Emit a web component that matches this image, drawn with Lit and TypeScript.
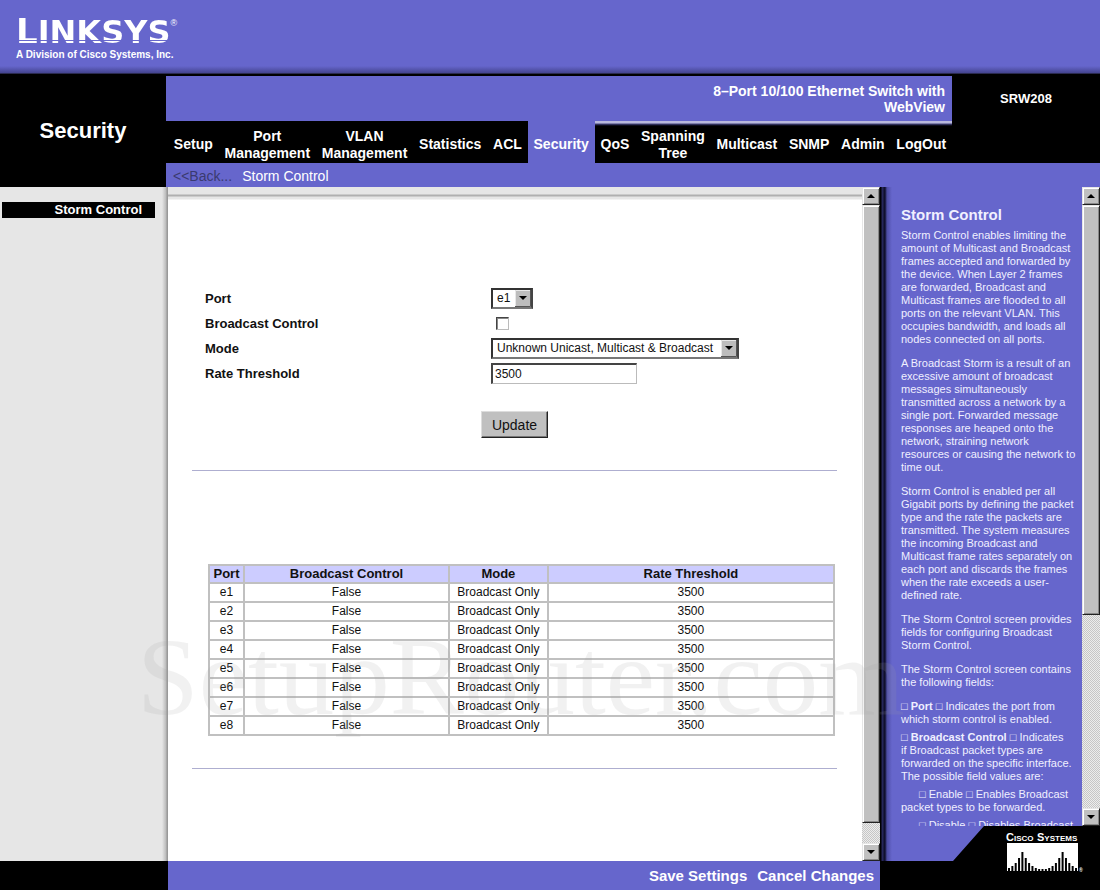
import { LitElement, html, css, svg } from "lit";
import { customElement, property } from "lit/decorators.js";
import { classMap } from "lit/directives/class-map.js";

const TABS = [
  "Setup",
  "Port Management",
  "VLAN Management",
  "Statistics",
  "ACL",
  "Security",
  "QoS",
  "Spanning Tree",
  "Multicast",
  "SNMP",
  "Admin",
  "LogOut",
];
const ACTIVE = 5;
const PORTS = ["e1", "e2", "e3", "e4", "e5", "e6", "e7", "e8"];

@customElement("scroll-rail")
class ScrollRail extends LitElement {
  /** Share of the rail taken by the thumb, in percent. */
  @property({ type: Number }) thumb = 50;

  static styles = css`
    :host {
      display: flex;
      flex-direction: column;
      flex: none;
      width: 18px;
      background: repeating-conic-gradient(#c6c6c6 0 25%, #ececec 0 50%) 0 0 / 2px 2px;
    }
    .step,
    .thumb {
      box-sizing: border-box;
      background: #c0c0c0;
      border: 1px solid;
      border-color: #e6e6e6 #222 #222 #e6e6e6;
      box-shadow: inset 1px 1px #fff, inset -1px -1px #888;
    }
    .step {
      flex: none;
      display: grid;
      place-items: center;
      height: 18px;
      padding: 0;
      border-radius: 0;
    }
    .rail {
      flex: 1;
      min-height: 0;
    }
    .thumb {
      height: var(--size);
    }
    svg {
      display: block;
    }
  `;

  render() {
    return html`
      <button class="step" aria-label="Scroll up">
        <svg width="8" height="4" viewBox="0 0 8 4"><path d="M0 4 4 0 8 4Z" /></svg>
      </button>
      <div class="rail"><div class="thumb" style="--size:${this.thumb}%"></div></div>
      <button class="step" aria-label="Scroll down">
        <svg width="8" height="4" viewBox="0 0 8 4"><path d="M0 0H8L4 4Z" /></svg>
      </button>
    `;
  }
}

@customElement("app-root")
class AppRoot extends LitElement {
  static styles = css`
    :host {
      position: relative;
      display: flex;
      flex-direction: column;
      height: 100vh;
      overflow: hidden;
      background: #000;
      color: #111;
      font-family: "Liberation Sans", Arial, sans-serif;
      font-size: 12px;
    }
    a {
      color: inherit;
      text-decoration: none;
    }

    .brand {
      flex: none;
      box-sizing: border-box;
      height: 74px;
      padding: 14px 16px 0;
      color: #fff;
      background: linear-gradient(#6666cc 66px, #44448f 73px, #111 74px);
    }
    .logo {
      display: flex;
      align-items: baseline;
      height: 34px;
      font: bold 32px/34px "DejaVu Sans", sans-serif;
    }
    .word {
      color: transparent;
      background: linear-gradient(#fff 26px, #6666cc 26px 27px, #fff 27px);
      -webkit-background-clip: text;
      background-clip: text;
    }
    .initial {
      font-size: 34px;
    }
    .mark {
      align-self: flex-start;
      font: 9px/18px "Liberation Sans", Arial, sans-serif;
    }
    .tagline {
      font: bold 10px/14px "Liberation Sans", Arial, sans-serif;
    }

    .masthead {
      flex: none;
      display: grid;
      grid-template-columns: 166px minmax(0, 1fr) 148px;
      grid-template-rows: 47px 42px 24px;
      color: #fff;
    }
    .section {
      grid-row: 1 / 4;
      display: grid;
      place-items: center;
      margin: 0;
      font-size: 22px;
    }
    .product {
      display: flex;
      justify-content: flex-end;
      align-items: center;
      margin-top: 2px;
      padding-right: 7px;
      background: #6666cc;
      font: bold 14px/16px "Liberation Sans", Arial, sans-serif;
      text-align: right;
    }
    .product span {
      max-width: 240px;
    }
    .model {
      display: grid;
      place-items: center;
      padding-top: 2px;
      font-size: 13px;
      font-weight: bold;
    }
    .tabs {
      grid-column: 2;
      display: flex;
      padding-left: 2px;
    }
    .tab {
      flex: 1 1 auto;
      display: flex;
      align-items: center;
      justify-content: center;
      padding: 5px 5px 0;
      font: bold 14px/17px "Liberation Sans", Arial, sans-serif;
      text-align: center;
    }
    .tab.wrap {
      width: min-content;
    }
    .tab.active {
      background: #6666cc;
    }
    .tab.after {
      background: linear-gradient(#b8b8dc 2px, #44447a 3px, #1a1a38 4px, #000 5px);
    }
    .crumbs {
      grid-column: 2 / 4;
      display: flex;
      align-items: center;
      gap: 10px;
      padding: 2px 0 0 7px;
      background: #6666cc;
      font-size: 14px;
    }
    .back {
      color: #3a3a70;
    }

    .body {
      flex: 1;
      min-height: 0;
      display: grid;
      grid-template-columns: 168px minmax(0, 1fr) 220px;
      grid-template-rows: minmax(0, 1fr) 29px;
    }
    .side {
      padding: 15px 13px 0 2px;
      background: linear-gradient(to left, #999 1px, #bbb 2px, #e6e6e6 6px);
    }
    .side a {
      display: block;
      padding-right: 13px;
      background: #000;
      color: #fff;
      font: bold 13px/16px "Liberation Sans", Arial, sans-serif;
      text-align: right;
    }
    .pane {
      display: flex;
      min-height: 0;
    }
    .sheet {
      flex: 1;
      min-width: 0;
      overflow: hidden;
      padding: 99px 25px 0 24px;
      background: linear-gradient(#e6e6e6 7px, #b0b0b0 8px 9px, #e6e6e6 10px 12px, #fff 13px);
    }
    .fields {
      display: grid;
      grid-template-columns: 286px minmax(0, 1fr);
      grid-auto-rows: 25px;
      align-items: center;
      justify-items: start;
      padding-left: 13px;
    }
    .fields label {
      font-size: 13px;
      font-weight: bold;
    }
    .pick {
      display: grid;
      align-items: stretch;
      box-sizing: border-box;
      height: 21px;
      border: 2px solid;
      border-color: #333 #444 #777 #333;
      background: #fff;
    }
    .pick.wide {
      width: 248px;
    }
    .pick select,
    .pick svg {
      grid-area: 1 / 1;
    }
    .pick select {
      appearance: none;
      margin: 0;
      padding: 0 20px 0 4px;
      border: 0;
      border-radius: 0;
      background: none;
      color: #111;
      font: 12px/17px "Liberation Sans", Arial, sans-serif;
    }
    .pick svg {
      justify-self: end;
      pointer-events: none;
    }
    .check,
    .rate,
    .update {
      appearance: none;
      box-sizing: border-box;
      border-radius: 0;
    }
    .check {
      width: 13px;
      height: 13px;
      margin: 0 0 0 5px;
      border: 1px solid;
      border-color: #444 #bbb #bbb #444;
      background: #fff;
      box-shadow: inset 1px 1px #888;
    }
    .rate {
      width: 146px;
      height: 21px;
      padding: 0 2px;
      border: solid #444;
      border-width: 2px 1px 1px 2px;
      border-right-color: #bbb;
      border-bottom-color: #bbb;
      color: #111;
      font: 12px/17px "Liberation Sans", Arial, sans-serif;
    }
    .update {
      display: block;
      height: 27px;
      margin: 25px auto 0;
      padding: 0 10px;
      border: 1px solid;
      border-color: #ddd #222 #222 #ddd;
      background: #c0c0c0;
      box-shadow: inset -1px -1px #777;
      color: #111;
      font: 14px/24px "Liberation Sans", Arial, sans-serif;
    }
    .rule {
      height: 1px;
      margin: 32px 0 0;
      border: 0;
      background: #aeaed0;
    }
    .list {
      padding: 93px 2px 0 16px;
    }
    table {
      width: 100%;
      table-layout: fixed;
      border-collapse: collapse;
      text-align: center;
    }
    th,
    td {
      height: 17px;
      padding: 0;
      border: 2px solid #c0c0c0;
      line-height: 17px;
    }
    th {
      height: 16px;
      background: #ccccff;
      font-size: 13px;
      line-height: 16px;
    }

    .actions {
      grid-column: 2;
      display: flex;
      align-items: center;
      justify-content: flex-end;
      gap: 10px;
      padding-right: 6px;
      background: #6666cc;
    }
    .actions button {
      padding: 0;
      border: 0;
      background: none;
      color: #fff;
      font: bold 15px/18px "Liberation Sans", Arial, sans-serif;
    }

    .help {
      grid-column: 3;
      grid-row: 1 / 3;
      display: flex;
      flex-direction: column;
      background: linear-gradient(to right, #000 1px, #26265a 2px 3px, #10102c 4px 5px, #4e4ea6 7px, #6666cc 12px);
      color: #f0f0ff;
    }
    .manual {
      flex: 1;
      min-height: 0;
      display: flex;
    }
    .text {
      flex: 1;
      overflow: hidden;
      padding: 19px 2px 0 21px;
      font-size: 11px;
      line-height: 13px;
    }
    .text h2 {
      margin: 0 0 5px;
      font-size: 15px;
      line-height: 18px;
    }
    .text p {
      margin: 0 0 11px;
    }
    .text p.item {
      margin-bottom: 5px;
    }
    .text p.value {
      text-indent: 18px;
    }
    .box {
      font-size: 11px;
      line-height: 1;
    }
    .maker {
      flex: none;
      box-sizing: border-box;
      height: 64px;
      padding: 3px 15px 0 0;
      background: #000;
      clip-path: polygon(104px 0, 100% 0, 100% 100%, 0 100%, 0 35px, 73px 35px);
    }
    .maker svg {
      display: block;
      margin-left: auto;
    }
    .maker text {
      fill: #fff;
      font-family: "Liberation Sans", Arial, sans-serif;
      font-weight: bold;
    }

    .watermark {
      position: absolute;
      left: 137px;
      bottom: 153px;
      color: rgba(160, 160, 160, 0.15);
      font: 111px/120px "Liberation Serif", serif;
      white-space: nowrap;
      pointer-events: none;
    }
  `;

  private arrow() {
    return html`<svg width="16" height="17" viewBox="0 0 16 17" aria-hidden="true">
      <rect width="16" height="17" fill="#bdbdbd" />
      <path d="M0.5 17V0.5H16" fill="none" stroke="#e8e8e8" />
      <path d="M0 16.5H15.5V0" fill="none" stroke="#555" />
      <path d="M4 6H12L8 10Z" />
    </svg>`;
  }

  private box() {
    return html`<span class="box">□</span>`;
  }

  private cisco() {
    const bars = [3, 5, 8, 13, 19, 13, 8, 5, 3, 2, 2, 2, 3, 5, 8, 13, 19, 13, 8, 5, 3];
    return html`<svg width="80" height="44" viewBox="0 0 80 44" role="img" aria-label="Cisco Systems">
      <text x="1" y="12" font-size="11">C<tspan font-size="8">ISCO</tspan></text>
      <text x="32" y="12" font-size="11">S<tspan font-size="8">YSTEMS</tspan></text>
      <rect x="2" y="14" width="71" height="28" fill="#fff" />
      ${bars.map(
        (h, i) => svg`<rect x=${3 + i * 3.35} y=${42 - h} width="2" height=${h} />`
      )}
      <text x="74" y="43" font-size="5">®</text>
    </svg>`;
  }

  render() {
    return html`
      <header class="brand">
        <div class="logo">
          <span class="word"><span class="initial">L</span>INKSYS</span><span class="mark">®</span>
        </div>
        <div class="tagline">A Division of Cisco Systems, Inc.</div>
      </header>

      <div class="masthead">
        <h1 class="section">Security</h1>
        <div class="product"><span>8–Port 10/100 Ethernet Switch with WebView</span></div>
        <div class="model">SRW208</div>
        <nav class="tabs">
          ${TABS.map(
            (name, i) => html`<a
              href="#"
              class=${classMap({
                tab: true,
                wrap: name.includes(" "),
                active: i === ACTIVE,
                after: i > ACTIVE,
              })}
              >${name}</a
            >`
          )}
        </nav>
        <div class="crumbs">
          <a class="back" href="#">&lt;&lt;Back...</a>
          <a href="#">Storm Control</a>
        </div>
      </div>

      <div class="body">
        <nav class="side"><a href="#">Storm Control</a></nav>
        <main class="pane">
          <div class="sheet">
            <div class="fields">
              <label for="port">Port</label>
              <span class="pick">
                <select id="port">
                  ${PORTS.map((p) => html`<option>${p}</option>`)}
                </select>
                ${this.arrow()}
              </span>
              <label for="control">Broadcast Control</label>
              <input class="check" id="control" type="checkbox" />
              <label for="mode">Mode</label>
              <span class="pick wide">
                <select id="mode">
                  <option>Unknown Unicast, Multicast &amp; Broadcast</option>
                </select>
                ${this.arrow()}
              </span>
              <label for="rate">Rate Threshold</label>
              <input class="rate" id="rate" type="text" value="3500" />
            </div>
            <button class="update">Update</button>
            <hr class="rule" />
            <div class="list">
              <table>
                <colgroup>
                  <col style="width:5.6%" />
                  <col style="width:32.8%" />
                  <col style="width:15.8%" />
                  <col />
                </colgroup>
                <thead>
                  <tr>
                    <th>Port</th>
                    <th>Broadcast Control</th>
                    <th>Mode</th>
                    <th>Rate Threshold</th>
                  </tr>
                </thead>
                <tbody>
                  ${PORTS.map(
                    (p) => html`<tr>
                      <td>${p}</td>
                      <td>False</td>
                      <td>Broadcast Only</td>
                      <td>3500</td>
                    </tr>`
                  )}
                </tbody>
              </table>
            </div>
            <hr class="rule" />
          </div>
          <scroll-rail .thumb=${96.8}></scroll-rail>
        </main>
        <footer class="actions">
          <button>Save Settings</button>
          <button>Cancel Changes</button>
        </footer>
        <aside class="help">
          <div class="manual">
            <div class="text">
              <h2>Storm Control</h2>
              <p>
                Storm Control enables limiting the amount of Multicast and Broadcast frames accepted
                and forwarded by the device. When Layer 2 frames are forwarded, Broadcast and
                Multicast frames are flooded to all ports on the relevant VLAN. This occupies
                bandwidth, and loads all nodes connected on all ports.
              </p>
              <p>
                A Broadcast Storm is a result of an excessive amount of broadcast messages
                simultaneously transmitted across a network by a single port. Forwarded message
                responses are heaped onto the network, straining network resources or causing the
                network to time out.
              </p>
              <p>
                Storm Control is enabled per all Gigabit ports by defining the packet type and the
                rate the packets are transmitted. The system measures the incoming Broadcast and
                Multicast frame rates separately on each port and discards the frames when the rate
                exceeds a user-defined rate.
              </p>
              <p>
                The Storm Control screen provides fields for configuring Broadcast Storm Control.
              </p>
              <p>The Storm Control screen contains the following fields:</p>
              <p class="item">
                ${this.box()} <b>Port</b> ${this.box()} Indicates the port from which storm control
                is enabled.
              </p>
              <p class="item">
                ${this.box()} <b>Broadcast Control</b> ${this.box()} Indicates<br />if Broadcast
                packet types are forwarded on the specific interface. The possible field values are:
              </p>
              <p class="item value">
                ${this.box()} Enable ${this.box()} Enables Broadcast packet types to be forwarded.
              </p>
              <p class="item value">${this.box()} Disable ${this.box()} Disables Broadcast</p>
            </div>
            <scroll-rail .thumb=${68}></scroll-rail>
          </div>
          <div class="maker">${this.cisco()}</div>
        </aside>
      </div>

      <div class="watermark" aria-hidden="true">SetupRouter.com</div>
    `;
  }
}
